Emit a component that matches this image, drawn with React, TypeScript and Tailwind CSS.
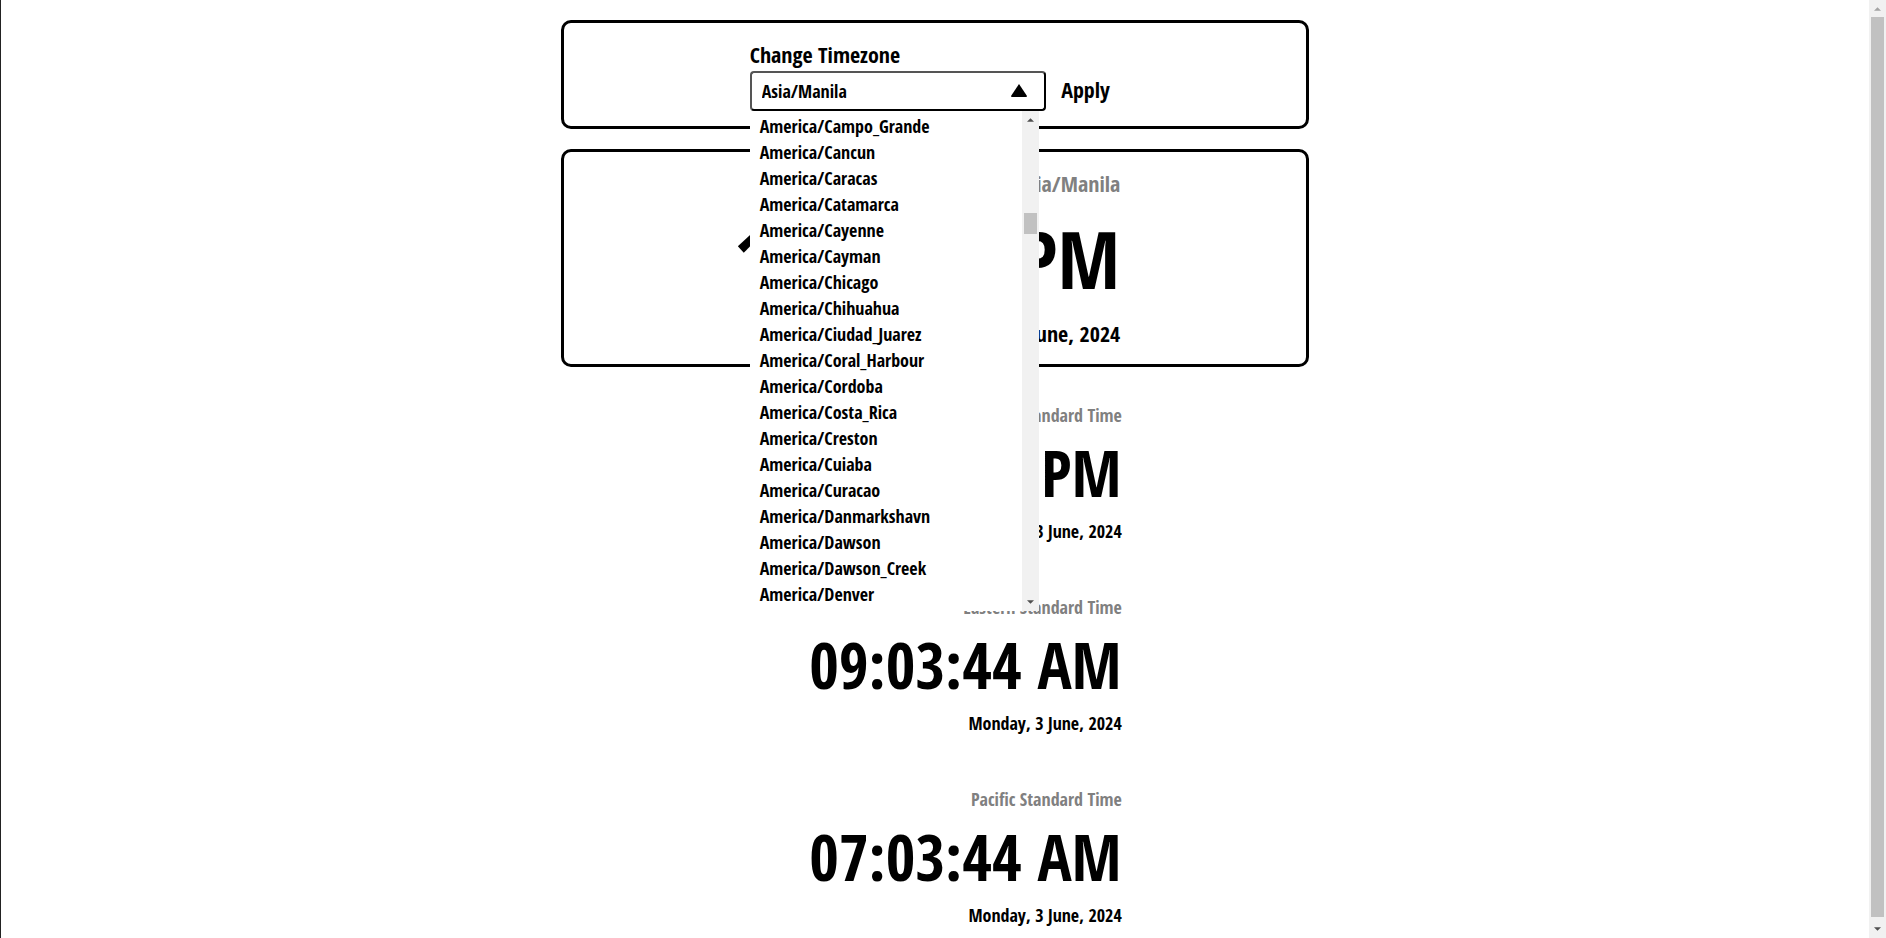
import { useState } from 'react';

const ZONES = [
  'America/Cambridge_Bay',
  'America/Campo_Grande',
  'America/Cancun',
  'America/Caracas',
  'America/Catamarca',
  'America/Cayenne',
  'America/Cayman',
  'America/Chicago',
  'America/Chihuahua',
  'America/Ciudad_Juarez',
  'America/Coral_Harbour',
  'America/Cordoba',
  'America/Costa_Rica',
  'America/Creston',
  'America/Cuiaba',
  'America/Curacao',
  'America/Danmarkshavn',
  'America/Dawson',
  'America/Dawson_Creek',
  'America/Denver',
];

const CLOCKS = [
  { name: 'Philippine Standard Time', time: '10:03:44 PM' },
  { name: 'Eastern Standard Time', time: '09:03:44 AM' },
  { name: 'Pacific Standard Time', time: '07:03:44 AM' },
];

const DATE = 'Monday, 3 June, 2024';

function Arrow({ up, className }: { up?: boolean; className: string }) {
  return (
    <svg viewBox="0 0 8 4" className={className} aria-hidden="true">
      <path d={up ? 'M0 4L4 0L8 4Z' : 'M0 0L4 4L8 0Z'} fill="currentColor" />
    </svg>
  );
}

function TimezonePicker() {
  const [zone, setZone] = useState('Asia/Manila');
  return (
    <section className="w-2/5 rounded-[10px] border-[3px] border-black pt-4 pb-[15px]">
      <form className="mx-auto w-1/2" onSubmit={(e) => e.preventDefault()}>
        <label htmlFor="zone" className="mb-0.5 block text-[22px] leading-[30px]">
          Change Timezone
        </label>
        <div className="flex items-center gap-[15px]">
          <div className="relative w-4/5 shrink-0">
            <select
              id="zone"
              value={zone}
              onChange={(e) => setZone(e.target.value)}
              className="relative z-20 block h-10 w-full appearance-none rounded border-2 border-t-[#555] border-r-black border-b-black border-l-[#555] bg-white px-2.5 text-lg leading-6"
            >
              <option>Asia/Manila</option>
              {ZONES.map((z) => (
                <option key={z}>{z}</option>
              ))}
            </select>
            <svg
              viewBox="0 0 16 13"
              className="pointer-events-none absolute top-[13px] right-[19px] z-30 h-[13px] w-4"
              aria-hidden="true"
            >
              <path d="M8 0L16 12Q16 13 15 13H1Q0 13 0 12Z" />
            </svg>
            <div className="absolute top-full right-[7px] left-0 z-10 flex h-[500px] overflow-hidden bg-white">
              <ul className="-mt-6 min-w-0 flex-1 px-2.5 text-lg leading-[26px]">
                {ZONES.map((z) => (
                  <li key={z}>{z}</li>
                ))}
              </ul>
              <div className="flex w-[17px] flex-col items-center justify-between bg-[#f1f1f1] py-[7px] text-[#505050]">
                <Arrow up className="h-1 w-[7px]" />
                <div className="mt-[91px] mb-auto h-[21px] w-[13px] bg-[#c1c1c1]" />
                <Arrow className="h-1 w-[7px]" />
              </div>
            </div>
          </div>
          <button type="submit" className="pb-1 text-[22px] leading-[30px]">
            Apply
          </button>
        </div>
      </form>
    </section>
  );
}

export default function App() {
  return (
    <div className="flex h-screen overflow-hidden bg-white font-['Open_Sans_Condensed','Liberation_Sans_Narrow','Roboto_Condensed','DejaVu_Sans_Condensed',sans-serif] font-bold text-black">
      <main className="flex min-w-0 flex-1 flex-col items-center gap-5 border-l border-[#222] pt-5">
        <TimezonePicker />

        <section className="w-2/5 rounded-[10px] border-[3px] border-black py-4">
          <div className="mx-auto flex w-1/2 flex-col items-end whitespace-nowrap">
            <h2 className="text-[22px] leading-[30px] text-[#808080]">Asia/Manila</h2>
            <p className="text-[80px] leading-[120px]">10:03:44 PM</p>
            <p className="text-[22px] leading-[30px]">{DATE}</p>
          </div>
        </section>

        {CLOCKS.map((clock) => (
          <section key={clock.name} className="w-2/5 py-4">
            <div className="mx-auto flex w-1/2 flex-col items-end whitespace-nowrap">
              <h2 className="text-lg leading-6 text-[#808080]">{clock.name}</h2>
              <p className="text-[64px] leading-[92px]">{clock.time}</p>
              <p className="text-lg leading-6">{DATE}</p>
            </div>
          </section>
        ))}
      </main>

      <div className="flex w-[17px] flex-col items-center gap-1.5 bg-[#f1f1f1] py-[7px]">
        <Arrow up className="h-1 w-[7px] text-[#a3a3a3]" />
        <div className="w-[13px] flex-1 bg-[#c1c1c1]" />
        <Arrow className="mt-1 h-1 w-[7px] text-[#505050]" />
      </div>
    </div>
  );
}
